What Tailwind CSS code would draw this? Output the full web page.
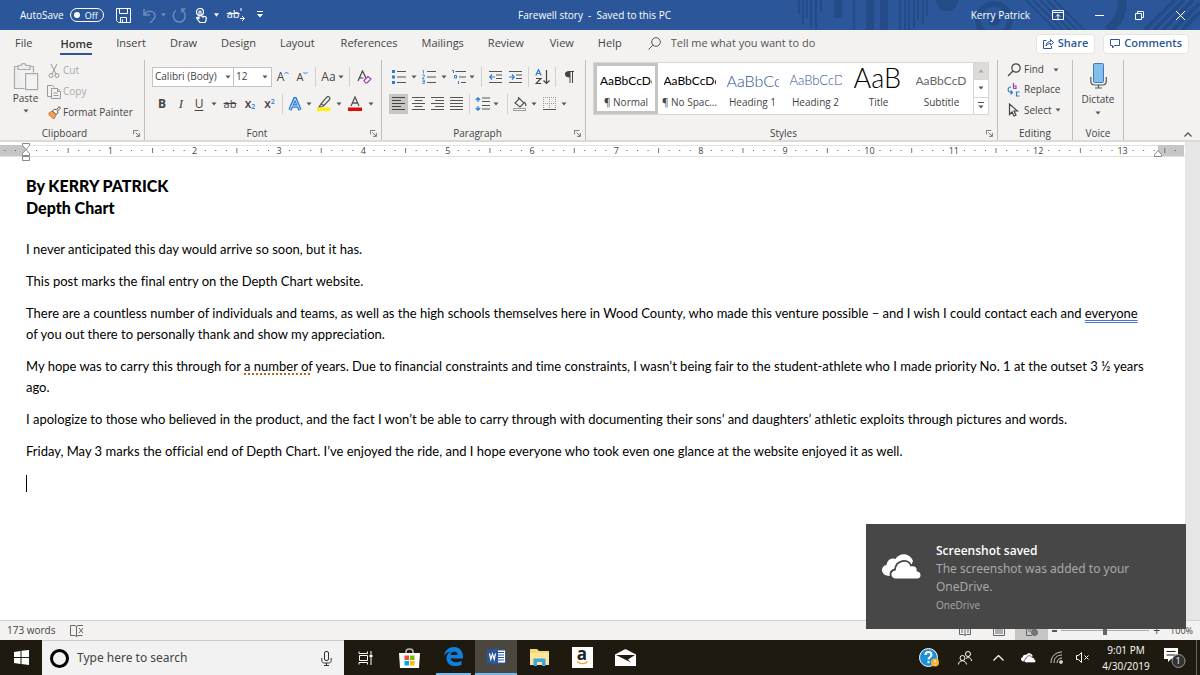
<!DOCTYPE html>
<html lang="en">
<head>
<meta charset="utf-8">
<title>Farewell story - Word</title>
<script src="https://cdn.jsdelivr.net/npm/@tailwindcss/browser@4"></script>
</head>
<body class="h-screen flex flex-col overflow-hidden bg-white font-['Open_Sans',sans-serif] text-[11px] text-[#444] select-none">
<svg width="0" height="0" class="absolute">
  <symbol id="caret" viewBox="0 0 6 4"><path d="M0.5 0.5h5L3 3.5z" fill="#555"/></symbol>
  <symbol id="launch" viewBox="0 0 8 8"><path d="M.5 5V.5H6M3 3l4 4M7.300 3.500v3.800H3.500" fill="none" stroke="#666"/></symbol>
  <symbol id="cloud" viewBox="0 0 40 26"><path d="M8 22C-2 22-2 12 4.500 11 5.500 5 10 3.500 13.500 5 18-2 28-1 31 7L28 14z" fill="#fff"/><path d="M15 25.500C7 25.500 6.500 17 13 15.500 14 6 26 4 29 11.500 33 10.500 36 13 35.500 16.500 41 17.500 40.500 25.500 35 25.500z" fill="#fff" stroke="var(--halo)" stroke-width="1.800"/></symbol>
</svg>

<header class="relative h-[30px] shrink-0 bg-[#2b579a] text-white flex items-center text-[10px]">
  <svg class="absolute right-0 top-0" width="410" height="30" viewBox="0 0 410 30" fill="none" stroke="#234b88" stroke-width="2" aria-hidden="true">
    <path d="M9 0v14M13 0v24M17 0v18M21 0v28M26 0v30M31 0v12M64 0v30M110 0v30M115 0v30M119 0v30M124 0v28M128 0v20M133 0v24M137 0v16"/>
    <path d="M48 0v18M80 0v30M94 0v30" stroke-width="8"/>
    <circle cx="157" cy="0" r="11" fill="#234b88" stroke="none"/>
    <circle cx="204" cy="20" r="16" stroke-width="6"/><circle cx="204" cy="20" r="5" fill="#234b88"/>
    <path d="M236 0l30 30M243 0l30 30M250 0l30 30M257 0l30 30M264 0l30 30"/>
    <path d="M332 0c2 12-4 22-14 30" stroke-width="9"/>
    <path d="M385 0l-30 30M394 0l-30 30M403 0l-30 30M410 3l-27 27M410 12l-18 18" stroke-width="4"/>
  </svg>
  <div class="relative flex-1 flex items-center pl-5">
    <label class="flex items-center gap-[6px]">AutoSave
      <input type="checkbox" role="switch" class="peer sr-only">
      <span class="w-[34px] h-[14px] rounded-full border border-white flex items-center justify-between pl-[3px] pr-[5px] text-[9px] leading-none"><span class="size-[6px] rounded-full bg-white"></span>Off</span>
    </label>
    <button aria-label="Save" class="ml-3"><svg width="15" height="15" viewBox="0 0 15 15" fill="none" stroke="#fff"><path d="M.5 .5h14v14H2.500l-2-2zM3.500 .5v5h8v-5M4.500 14.500v-5h6v5M6.500 11.500v3"/></svg></button>
    <button aria-label="Undo" class="ml-3 flex items-center gap-1 opacity-30"><svg width="14" height="15" viewBox="0 0 14 15" fill="none" stroke="#fff" stroke-width="1.500"><path d="M1 1v6h6M1 7C5 1 12 3 12 8c0 3-3 5-5 7"/></svg><svg width="5" height="4" viewBox="0 0 6 4"><path d="M0 0h6L3 4z" fill="#fff"/></svg></button>
    <button aria-label="Redo" class="ml-[6px] opacity-30"><svg width="15" height="15" viewBox="0 0 15 15" fill="none" stroke="#fff" stroke-width="1.500"><path d="M10 4.500V1h3.500M4 2.500C-1 6 1.500 14 7.500 14S15 6 10.500 2"/></svg></button>
    <button aria-label="Touch mode" class="ml-2 flex items-center gap-[6px]"><svg width="13" height="15" viewBox="0 0 13 15" fill="none" stroke="#fff" stroke-width="1.200"><circle cx="5" cy="4" r="3.500"/><path d="M4 11V4c0-1.300 2-1.300 2 0v4l4 .5c1.500.3 1.500 1.500 1 4l-1 2H5L1.500 10c0-1 1.500-1 2.500 1M8 8v2"/></svg><svg width="5" height="4" viewBox="0 0 6 4"><path d="M0 0h6L3 4z" fill="#fff"/></svg></button>
    <button aria-label="Replace text" class="ml-2 flex text-[11px] leading-none"><span class="line-through">ab</span><svg width="5" height="14" viewBox="0 0 5 14" fill="none" stroke="#fff"><path d="M1 0v3M0 10.500h4M2 8l2.500 2.500L2 13"/></svg></button>
    <button aria-label="Customize toolbar" class="ml-3"><svg width="6" height="8" viewBox="0 0 6 8"><path d="M0 0h6v1H0zM0 3h6L3 6.500z" fill="#fff"/></svg></button>
  </div>
  <h1 class="relative pr-4 whitespace-pre">Farewell story  -  Saved to this PC</h1>
  <div class="relative flex-1 flex items-center justify-end pr-[15px]">
    <span>Kerry Patrick</span>
    <button aria-label="Ribbon display options" class="ml-[22px]"><svg width="12" height="10" viewBox="0 0 12 10" fill="none" stroke="#fff"><path d="M.5 .5h11v9H.5zM.5 2.500h11M6 9V4.500M4 6.500l2-2 2 2"/></svg></button>
    <button aria-label="Minimize" class="ml-[31px]"><svg width="9" height="9" viewBox="0 0 9 9" stroke="#fff"><path d="M0 4.500h9"/></svg></button>
    <button aria-label="Restore" class="ml-[31px]"><svg width="9" height="9" viewBox="0 0 9 9" fill="none" stroke="#fff"><path d="M.5 2.500h6v6h-6zM2.500 2V.5h6v6H7"/></svg></button>
    <button aria-label="Close" class="ml-[32px]"><svg width="9" height="9" viewBox="0 0 9 9" stroke="#fff"><path d="M0 0l9 9M9 0L0 9"/></svg></button>
  </div>
</header>

<nav class="h-[27px] shrink-0 bg-[#f3f2f1] flex items-center pl-[15px] pr-[11px] gap-6 whitespace-nowrap">
  <a href="#" class="pr-1">File</a>
  <a href="#" class="font-semibold text-[#333] border-b-2 border-[#2b579a] pt-[2px] leading-[19px]">Home</a>
  <a href="#">Insert</a><a href="#">Draw</a><a href="#">Design</a><a href="#">Layout</a><a href="#" class="pl-[2px]">References</a><a href="#">Mailings</a><a href="#">Review</a><a href="#" class="pl-[2px]">View</a><a href="#">Help</a>
  <label class="flex-1 flex items-center gap-[10px] pl-[2px]"><svg width="13" height="13" viewBox="0 0 13 13" fill="none" stroke="#555"><circle cx="8" cy="5" r="4.300"/><path d="M5 8l-4.500 4.500"/></svg><input type="text" aria-label="Tell me what you want to do" placeholder="Tell me what you want to do" class="w-[170px] outline-none placeholder:text-[#555]"></label>
  <div class="flex gap-2 font-semibold text-[#2b579a]">
    <button class="h-5 px-[6px] bg-white border border-[#e6e4e2] rounded-sm flex items-center gap-1"><svg width="11" height="11" viewBox="0 0 11 11" fill="none" stroke="#2b579a"><path d="M3.500 2.500H.5v8h8V8M3 8c0-3 2-4.500 4.500-4.500v-2L10.500 4.500 7.500 7V5.500C5.500 5.500 4 6 3 8z"/></svg>Share</button>
    <button class="h-5 px-[6px] bg-white border border-[#e6e4e2] rounded-sm flex items-center gap-1"><svg width="10" height="10" viewBox="0 0 10 10" fill="none" stroke="#2b579a"><path d="M.5 .5h9v6h-5l-2 2.500v-2.500h-2z"/></svg>Comments</button>
  </div>
</nav>

<main class="contents">
<section aria-label="Ribbon" class="h-[85px] shrink-0 bg-[#f3f2f1] border-b-2 border-[#dcdad8] flex pt-[3px] text-[10px] whitespace-nowrap">
  <div class="w-[145px] shrink-0 border-r border-[#c0bebc] flex flex-col justify-between">
    <div class="flex h-[63px]">
      <button class="w-[47px] pl-1 flex flex-col items-center"><svg class="mt-[3px]" width="26" height="28" viewBox="0 0 26 28" fill="none" stroke="#aaa" stroke-width="1.200"><path d="M4.500 3.500H1.500v22h10M17.500 3.500h3v6M5 2.500h3c0-2.500 5-2.500 5 0h4v4H5z" fill="#eee"/><path d="M12.600 10.600h12v16h-12z" fill="#f3f2f1"/></svg><span class="leading-[14px]">Paste</span><svg class="mt-1" width="6" height="4"><use href="#caret"/></svg></button>
      <div class="flex flex-col">
        <button class="h-[21px] flex items-center gap-[3px] pl-px text-[#aaa]"><svg width="12" height="14" viewBox="0 0 12 14" fill="none" stroke="#999"><path d="M3 0l5 10M9 0L4 10"/><circle cx="3" cy="11.500" r="2"/><circle cx="9" cy="11.500" r="2"/></svg>Cut</button>
        <button class="h-[21px] flex items-center gap-[2px] text-[#aaa]"><svg width="14" height="14" viewBox="0 0 14 14" fill="none" stroke="#999"><path d="M4.500 11.500h-4V.5h5l2 2M4.500 3.500h6l3 3v7h-9zM10.500 3.500v3h3M6.500 8h4M6.500 10.500h5"/></svg>Copy</button>
        <button class="h-[21px] flex items-center gap-[2px] pl-px"><svg width="13" height="13" viewBox="0 0 13 13"><path d="M1 7l3-2 4 4-2 4-5-4z" fill="#f0a259" stroke="#d67a28"/><path d="M4.500 5L6.500 3l2 1L11 .5 12.500 2 9.500 5l.5 2-2 1.500z" fill="#fff" stroke="#555"/></svg>Format Painter</button>
      </div>
    </div>
    <div class="flex items-center h-[14px] pr-1"><span class="flex-1 text-center pr-1">Clipboard</span><button aria-label="Clipboard settings"><svg width="7" height="7"><use href="#launch"/></svg></button></div>
  </div>

  <div class="w-[237px] shrink-0 border-r border-[#c0bebc] flex flex-col justify-between pl-[7px]">
    <div>
      <div class="flex items-center h-[27px] mt-[3px]">
        <div class="relative"><select aria-label="Font" class="appearance-none block w-[82px] h-5 bg-white border border-[#c6c4c2] pl-[2px]"><option>Calibri (Body)</option></select><svg class="absolute right-[3px] top-2 pointer-events-none" width="6" height="4"><use href="#caret"/></svg></div>
        <div class="relative"><select aria-label="Font size" class="appearance-none block w-[39px] h-5 bg-white border border-[#c6c4c2] -ml-px pl-[2px]"><option>12</option></select><svg class="absolute right-1 top-2 pointer-events-none" width="6" height="4"><use href="#caret"/></svg></div>
        <button aria-label="Grow font" class="w-[22px] flex justify-center text-[12px] leading-none">A<svg width="5" height="4" viewBox="0 0 5 4" fill="none" stroke="#2b7cd3"><path d="M.5 3L2.500 1l2 2"/></svg></button>
        <button aria-label="Shrink font" class="w-[17px] flex justify-center text-[11px] leading-none">A<svg width="5" height="4" viewBox="0 0 5 4" fill="none" stroke="#2b7cd3"><path d="M.5 1L2.500 3l2-2"/></svg></button>
        <i class="w-px h-5 bg-[#d2d0ce] mx-1"></i>
        <button aria-label="Change case" class="w-[25px] flex items-center justify-center gap-[2px] text-[12px] leading-none">Aa<svg class="shrink-0" width="6" height="4"><use href="#caret"/></svg></button>
        <i class="w-px h-5 bg-[#d2d0ce] mx-1"></i>
        <button aria-label="Clear formatting" class="w-[21px] flex justify-center"><svg width="15" height="14" viewBox="0 0 15 14" fill="none"><path d="M1 11L5.500 1 9 8M2.500 8h4" stroke="#444" stroke-width="1.200"/><path d="M7 10.500l4-4 3 2.500-4 4H8.500z" stroke="#9b3fae" stroke-width="1.200"/></svg></button>
      </div>
      <div class="flex items-center h-[27px] text-[12px] leading-none">
        <button aria-label="Bold" class="w-5 font-bold">B</button>
        <button aria-label="Italic" class="w-[18px] italic font-['Liberation_Serif',serif] text-[13px]">I</button>
        <button aria-label="Underline" class="w-[18px] underline underline-offset-2">U</button>
        <button aria-label="Underline styles" class="w-3 flex justify-center"><svg width="6" height="4"><use href="#caret"/></svg></button>
        <button aria-label="Strikethrough" class="w-5 line-through text-[11px]">ab</button>
        <button aria-label="Subscript" class="w-5 flex items-end justify-center font-semibold">x<span class="text-[7px] leading-none text-[#2b7cd3]">2</span></button>
        <button aria-label="Superscript" class="w-[19px] flex items-start justify-center font-semibold">x<span class="text-[7px] leading-none text-[#2b7cd3]">2</span></button>
        <i class="w-px h-5 bg-[#d2d0ce] mx-[3px]"></i>
        <button aria-label="Text effects" class="w-[18px] flex justify-center"><svg width="14" height="14" viewBox="0 0 14 14" fill="none"><path d="M2 13L7 1l5 12M4 9h6" stroke="#2b7cd3" stroke-width="3.400"/><path d="M2.200 12.500L7 1.500l4.800 11M4 9h6" stroke="#bfe0f7"/></svg></button>
        <button aria-label="Text effects menu" class="w-[10px] flex justify-center"><svg width="6" height="4"><use href="#caret"/></svg></button>
        <button aria-label="Highlight colour" class="w-[20px] flex justify-center"><svg width="14" height="15" viewBox="0 0 14 15" fill="none"><path d="M4 8l5.500-6.500C11-.5 14 1.500 12.500 3.500L7 9.500zM4 8l-2 3 3.500-.5L7 9.500" stroke="#555" stroke-width="1.200"/><path d="M0 11.500h13v3.500H0z" fill="#fff000"/></svg></button>
        <button aria-label="Highlight menu" class="w-[10px] flex justify-center"><svg width="6" height="4"><use href="#caret"/></svg></button>
        <button aria-label="Font colour" class="w-[22px] flex justify-center"><svg width="14" height="15" viewBox="0 0 14 15" fill="none"><path d="M3 10L7 1l4 9M4.500 7h5" stroke="#555" stroke-width="1.300"/><path d="M0 11.500h14v3.500H0z" fill="#e00b0b"/></svg></button>
        <button aria-label="Font colour menu" class="w-[9px] flex justify-center"><svg width="6" height="4"><use href="#caret"/></svg></button>
      </div>
    </div>
    <div class="flex items-center h-[14px] pr-1"><span class="flex-1 text-center pr-2">Font</span><button aria-label="Font settings"><svg width="7" height="7"><use href="#launch"/></svg></button></div>
  </div>

  <div class="w-[204px] shrink-0 border-r border-[#c0bebc] flex flex-col justify-between pl-[7px]">
    <div>
      <div class="flex items-center h-[27px] mt-[3px]">
        <button aria-label="Bullets" class="w-[19px] flex justify-center"><svg width="14" height="14" viewBox="0 0 14 14"><path d="M0 0h3v3H0zM0 5.500h3v3H0zM0 11h3v3H0z" fill="#2b7cd3"/><path d="M5 1.500h9M5 7h9M5 12.500h9" stroke="#555"/></svg></button>
        <button aria-label="Bullets menu" class="w-[11px] flex justify-center"><svg width="6" height="4"><use href="#caret"/></svg></button>
        <button aria-label="Numbering" class="w-[19px] flex justify-center"><svg width="14" height="14" viewBox="0 0 14 14" fill="none"><path d="M.5 .5h1v3M.3 5h2v1.500l-2 2h2M.3 10h2v3.500h-2M.3 11.700h2" stroke="#2b7cd3" stroke-width=".8"/><path d="M5 1.500h9M5 7h9M5 12.500h9" stroke="#555"/></svg></button>
        <button aria-label="Numbering menu" class="w-[11px] flex justify-center"><svg width="6" height="4"><use href="#caret"/></svg></button>
        <button aria-label="Multilevel list" class="w-[19px] flex justify-center"><svg width="14" height="14" viewBox="0 0 14 14" fill="none"><path d="M0 .5h1.500V3M2.500 5.500h2V8h-2zM6.500 11v3" stroke="#2b7cd3"/><path d="M3.500 1.500H14M7 7h7M9 12.500h5" stroke="#555"/></svg></button>
        <button aria-label="Multilevel menu" class="w-[8px] flex justify-center"><svg width="6" height="4"><use href="#caret"/></svg></button>
        <i class="w-px h-5 bg-[#d2d0ce] ml-[5px] mr-[3px]"></i>
        <button aria-label="Decrease indent" class="w-5 flex justify-center"><svg width="13" height="12" viewBox="0 0 13 12" fill="none"><path d="M0 .5h13M7 4h6M7 7.500h6M0 11.500h13" stroke="#555"/><path d="M6 6H.8M3 3.500L.8 6 3 8.500" stroke="#2b7cd3" stroke-width="1.200"/></svg></button>
        <button aria-label="Increase indent" class="w-5 flex justify-center"><svg width="13" height="12" viewBox="0 0 13 12" fill="none"><path d="M0 .5h13M7 4h6M7 7.500h6M0 11.500h13" stroke="#555"/><path d="M0 6h5M3 3.500L5.200 6 3 8.500" stroke="#2b7cd3" stroke-width="1.200"/></svg></button>
        <i class="w-px h-5 bg-[#d2d0ce] mx-[3px]"></i>
        <button aria-label="Sort" class="w-5 flex justify-center"><svg width="15" height="16" viewBox="0 0 15 16" fill="none"><path d="M.8 6.500L3.500 .5l2.700 6M1.700 4.500h3.600" stroke="#2b7cd3" stroke-width="1.200"/><path d="M1 9.500h5l-5 5h5.300M11.500 1v13M8.500 11.500l3 3 3-3" stroke="#444" stroke-width="1.200"/></svg></button>
        <i class="w-px h-5 bg-[#d2d0ce] mx-[3px]"></i>
        <button aria-label="Show paragraph marks" class="w-5 flex justify-center"><svg width="9" height="12" viewBox="0 0 9 12"><path d="M9 0v1H8v11H7V1H5.500v11h-1V6.500C-1.500 6.500-1.500 0 4 0z" fill="#444"/></svg></button>
      </div>
      <div class="flex items-center h-[27px]">
        <button aria-label="Align left" class="w-[19px] h-5 bg-[#c8c6c4] flex items-center justify-center"><svg width="13" height="13" viewBox="0 0 13 13" stroke="#444"><path d="M0 .5h13M0 3.500h9M0 6.500h13M0 9.500h9M0 12.500h13"/></svg></button>
        <button aria-label="Center" class="w-5 flex justify-center"><svg width="13" height="13" viewBox="0 0 13 13" stroke="#555"><path d="M0 .5h13M2.500 3.500h8M0 6.500h13M2.500 9.500h8M0 12.500h13"/></svg></button>
        <button aria-label="Align right" class="w-[19px] flex justify-center"><svg width="13" height="13" viewBox="0 0 13 13" stroke="#555"><path d="M0 .5h13M4 3.500h9M0 6.500h13M4 9.500h9M0 12.500h13"/></svg></button>
        <button aria-label="Justify" class="w-[19px] flex justify-center"><svg width="13" height="13" viewBox="0 0 13 13" stroke="#555"><path d="M0 .5h13M0 3.500h13M0 6.500h13M0 9.500h13M0 12.500h13"/></svg></button>
        <i class="w-px h-5 bg-[#d2d0ce] mx-[3px]"></i>
        <button aria-label="Line spacing" class="w-[27px] flex items-center gap-[3px] pl-[2px]"><svg width="15" height="14" viewBox="0 0 15 14" fill="none"><path d="M3 1v4M3 9v4M.8 3L3 .8 5.200 3M.8 11L3 13.200 5.200 11" stroke="#2b7cd3" stroke-width="1.200"/><path d="M7 1h8M7 4.500h8M7 8.500h8M7 12h8" stroke="#555"/></svg><svg width="6" height="4"><use href="#caret"/></svg></button>
        <i class="w-px h-5 bg-[#d2d0ce] ml-[7px] mr-[3px]"></i>
        <button aria-label="Shading" class="w-[18px] flex justify-center"><svg width="14" height="14" viewBox="0 0 14 14" fill="none" stroke="#555"><path d="M2 6l4.500-4.500L11 6l-4 4zM5.500 3V0M11 5c1.500 1 2 3 1.500 4" stroke-width="1.200"/><path d="M.5 11.500h12v2H.5z" fill="#fff" stroke="#999"/></svg></button>
        <button aria-label="Shading menu" class="w-[10px] flex justify-center"><svg width="6" height="4"><use href="#caret"/></svg></button>
        <button aria-label="Borders" class="w-5 flex justify-center"><svg width="13" height="13" viewBox="0 0 13 13" fill="none" stroke="#999"><path d="M0 .5h13M0 6.500h13M.5 0v13M6.500 0v13M12.500 0v13" stroke-dasharray="1 1"/><path d="M0 12.500h13" stroke="#555"/></svg></button>
        <button aria-label="Borders menu" class="w-[10px] flex justify-center"><svg width="6" height="4"><use href="#caret"/></svg></button>
      </div>
    </div>
    <div class="flex items-center h-[14px] pr-1"><span class="flex-1 text-center pr-2">Paragraph</span><button aria-label="Paragraph settings"><svg width="7" height="7"><use href="#launch"/></svg></button></div>
  </div>

  <div class="w-[412px] shrink-0 border-r border-[#c0bebc] flex flex-col justify-between pl-[7px]">
    <div class="flex w-[396px] h-[53px] mt-[2px] bg-white border border-[#d8d6d4]">
      <button class="w-[64px] border-[3px] border-[#c6c4c2] flex flex-col items-center"><span class="h-[29px] w-[52px] overflow-hidden leading-[29px] text-left font-['Lato'] text-[12px] text-black">AaBbCcDd</span><span class="leading-[14px]">¶ Normal</span></button>
      <button class="w-[63px] pt-[3px] flex flex-col items-center"><span class="h-[29px] w-[52px] overflow-hidden leading-[29px] text-left font-['Lato'] text-[12px] text-black">AaBbCcDd</span><span class="leading-[14px]">¶ No Spac...</span></button>
      <button class="w-[63px] pt-[3px] flex flex-col items-center"><span class="h-[29px] w-[52px] overflow-hidden leading-[29px] text-left font-['Lato'] text-[16px] font-light text-[#2f5496]">AaBbCc</span><span class="leading-[14px]">Heading 1</span></button>
      <button class="w-[63px] pt-[3px] flex flex-col items-center"><span class="h-[29px] w-[52px] overflow-hidden leading-[29px] text-left font-['Lato'] text-[13px] font-light text-[#2f5496]">AaBbCcD</span><span class="leading-[14px]">Heading 2</span></button>
      <button class="w-[63px] pt-[3px] flex flex-col items-center"><span class="h-[29px] w-[50px] overflow-hidden leading-[24px] text-left font-['Lato'] text-[27px] font-light text-black">AaB</span><span class="leading-[14px]">Title</span></button>
      <button class="w-[63px] pt-[3px] flex flex-col items-center"><span class="h-[29px] w-[52px] overflow-hidden leading-[29px] text-left font-['Lato'] text-[12px] text-[#666]">AaBbCcD</span><span class="leading-[14px]">Subtitle</span></button>
      <div class="flex-1 flex flex-col border-l border-[#d8d6d4]">
        <button aria-label="Previous styles" class="flex-1 bg-[#dddbd9] flex items-center justify-center"><svg class="rotate-180 opacity-40" width="6" height="4"><use href="#caret"/></svg></button>
        <button aria-label="Next styles" class="flex-1 border-y border-[#d8d6d4] flex items-center justify-center"><svg width="6" height="4"><use href="#caret"/></svg></button>
        <button aria-label="More styles" class="flex-1 flex flex-col gap-[2px] items-center justify-center"><i class="w-[6px] h-px bg-[#555]"></i><svg width="6" height="4"><use href="#caret"/></svg></button>
      </div>
    </div>
    <div class="flex items-center h-[14px] pr-1"><span class="flex-1 text-center pr-3">Styles</span><button aria-label="Style settings"><svg width="7" height="7"><use href="#launch"/></svg></button></div>
  </div>

  <div class="w-[75px] shrink-0 border-r border-[#c0bebc] flex flex-col justify-between">
    <div class="pl-[9px]">
      <button class="h-[19px] flex items-center gap-[3px]"><svg width="14" height="14" viewBox="0 0 14 14" fill="none" stroke="#444" stroke-width="1.200"><circle cx="9" cy="5" r="4.200"/><path d="M6 8l-5 5"/></svg>Find<svg class="ml-[6px]" width="6" height="4"><use href="#caret"/></svg></button>
      <button class="h-[21px] flex items-center gap-[3px]"><svg width="14" height="14" viewBox="0 0 14 14" fill="none"><path d="M6.500 0v5.500M6.500 3h2.500v2.500H6.500" stroke="#9b3fae" stroke-width="1.200"/><path d="M4 4C0 4 0 9.500 5 9.500M3.500 7.500l2 2-2 2M12.500 9H9.500v4h3" stroke="#2b7cd3" stroke-width="1.200"/></svg>Replace</button>
      <button class="h-[20px] flex items-center gap-[3px]"><svg width="14" height="14" viewBox="0 0 14 14" fill="none" stroke="#444" stroke-width="1.200"><path d="M2.500 1v10.500L5 9l2 4 2-1-2-4h3.500z"/></svg>Select<svg width="6" height="4"><use href="#caret"/></svg></button>
    </div>
    <span class="h-[14px] text-center">Editing</span>
  </div>
  <div class="w-[51px] shrink-0 border-r border-[#c0bebc] flex flex-col justify-between">
    <button class="flex flex-col items-center"><svg class="mt-[3px]" width="17" height="26" viewBox="0 0 17 26" fill="none"><rect x="3.500" y=".5" width="10" height="19" rx="1" fill="#83beec" stroke="#3a7cb8"/><path d="M.8 14v4c0 3 2 4 4 4h7.500c2 0 4-1 4-4v-4M8.500 22v3M5 25h7" stroke="#555" stroke-width="1.200"/></svg><span class="mt-[2px] leading-[16px]">Dictate</span><svg class="mt-1" width="6" height="4"><use href="#caret"/></svg></button>
    <span class="h-[14px] text-center">Voice</span>
  </div>
  <div class="flex-1 flex items-end justify-end pr-2 pb-[3px]"><button aria-label="Collapse the ribbon"><svg width="8" height="5" viewBox="0 0 8 5" fill="none" stroke="#555" stroke-width="1.300"><path d="M.5 4.500L4 1l3.500 3.500"/></svg></button></div>
</section>

<section class="flex-1 min-h-0 flex">
  <div class="flex-1 flex flex-col min-w-0">
    <svg id="ruler" class="block w-full h-[22px] shrink-0 font-['Open_Sans'] text-[9px]" aria-label="Ruler"></svg>
    <article class="flex-1 pl-[26px] pr-9 pt-[11px] text-[13px] leading-[21px] text-black font-['Lato'] [font-variant-ligatures:none] outline-none" contenteditable="true" spellcheck="false">
      <h2 class="font-black text-[16px] leading-[22px]">By KERRY PATRICK<br>Depth Chart</h2>
      <div class="mt-5 flex flex-col gap-[11px]">
        <p>I never anticipated this day would arrive so soon, but it has.</p>
        <p>This post marks the final entry on the Depth Chart website.</p>
        <p>There are a countless number of individuals and teams, as well as the high schools themselves here in Wood County, who made this venture possible – and I wish I could contact each and <span class="underline decoration-double decoration-[#4a72d8] underline-offset-2">everyone</span> of you out there to personally thank and show my appreciation.</p>
        <p>My hope was to carry this through for <span class="underline decoration-dotted decoration-2 decoration-[#b5651d] underline-offset-2">a number of</span> years. Due to financial constraints and time constraints, I wasn’t being fair to the student-athlete who I made priority No. 1 at the outset 3 ½ years ago.</p>
        <p>I apologize to those who believed in the product, and the fact I won’t be able to carry through with documenting their sons’ and daughters’ athletic exploits through pictures and words.</p>
        <p>Friday, May 3 marks the official end of Depth Chart. I’ve enjoyed the ride, and I hope everyone who took even one glance at the website enjoyed it as well.</p>
        <p class="flex items-center h-[21px]"><i class="w-px h-[17px] bg-black"></i></p>
      </div>
    </article>
  </div>
  <div class="w-[15px] shrink-0 bg-[#e6e6e6]"></div>
</section>
</main>

<footer class="h-5 shrink-0 bg-[#f3f2f1] border-t border-[#d2d0ce] flex items-center pl-[7px] pr-[7px] text-[10px]">
  <span>173 words</span>
  <button aria-label="Proofing" class="ml-[14px]"><svg width="14" height="12" viewBox="0 0 14 12" fill="none" stroke="#666"><path d="M6.500 1.500L5 .5H.5v10H5l1.500 1 1.500-1h4.500M6.500 1.500v10M6.500 1.500L8 .5h5M9 3l4 5M13 3L9 8"/></svg></button>
  <div class="flex-1"></div>
  <button aria-label="Read mode" class="w-[34px] h-full flex items-center justify-center"><svg width="12" height="10" viewBox="0 0 12 10" fill="none" stroke="#666"><path d="M.5 .5h4L6 1.500 7.500 .5h4v8h-4L6 9.500 4.500 8.500h-4zM6 1.500v8M2 4h2M2 6h2M8 4h2M8 6h2"/></svg></button>
  <button aria-label="Print layout" class="w-[33px] h-full flex items-center justify-center"><svg width="12" height="10" viewBox="0 0 12 10" fill="none" stroke="#666"><path d="M.5 .5h11v9H.5zM2 3h8M2 5h8M2 7h8"/></svg></button>
  <button aria-label="Web layout" class="w-[33px] h-full bg-[#c8c6c4] flex items-center justify-center"><svg width="12" height="10" viewBox="0 0 12 10" fill="none" stroke="#666"><path d="M6 9.500H.5v-9h9V4M2 3h5M2 5h3"/><circle cx="8.500" cy="6.500" r="3" fill="#777"/></svg></button>
  <span class="ml-1 w-[5px] h-[2px] bg-[#555]"></span>
  <span class="relative mx-1 w-[88px] h-px bg-[#aaa]"><span class="absolute left-[42px] -top-[5px] w-1 h-[10px] bg-[#666]"></span></span>
  <span class="text-[12px] leading-none">+</span>
  <span class="ml-[10px] text-[9px]">100%</span>
</footer>

<aside class="absolute right-[14px] bottom-[46px] w-[320px] h-[105px] bg-[#474747] flex pl-4 pt-[18px] gap-[14px] [--halo:#474747]">
  <svg class="mt-3 shrink-0" width="40" height="26"><use href="#cloud"/></svg>
  <div class="text-[#a8a8a8] text-[12px] leading-[18px]">
    <p class="text-white font-semibold">Screenshot saved</p>
    <p class="font-['Noto_Sans']">The screenshot was added to your<br>OneDrive.</p>
    <p class="text-[10px]">OneDrive</p>
  </div>
</aside>

<nav aria-label="Taskbar" class="h-[35px] shrink-0 bg-[#1f1a10] text-white flex items-center">
  <button aria-label="Start" class="w-[42px] flex justify-center"><svg width="15" height="15" viewBox="0 0 15 15" fill="#fff"><path d="M0 2l6.500-1v6H0zM7.500.8L15 0v7H7.500zM0 8h6.500v6L0 13zM7.500 8H15v7l-7.500-1z"/></svg></button>
  <label class="w-[302px] h-full bg-[#f2f2f2] border-t border-[#ccc] flex items-center pl-2 pr-3 gap-2">
    <span class="size-[19px] shrink-0 rounded-full border-[3px] border-black"></span>
    <input type="text" aria-label="Type here to search" placeholder="Type here to search" class="flex-1 min-w-0 font-['Noto_Sans'] text-[12px] outline-none placeholder:text-[#444]">
    <svg width="11" height="15" viewBox="0 0 11 15" fill="none" stroke="#333"><rect x="3.500" y=".5" width="4" height="9" rx="1.500"/><path d="M.8 7v2.500c0 2 1.500 2.500 2.500 2.500h4.400c1 0 2.500-.5 2.500-2.500V7M5.500 12v3M3 14.500h5"/></svg>
  </label>
  <button aria-label="Task view" class="w-[43px] flex justify-center"><svg width="15" height="14" viewBox="0 0 15 14" fill="none" stroke="#fff"><path d="M1 .5v2h8.500v-2M1 13.500v-2h8.500v2M1.500 4.500h8v5h-8zM13 0v3M13 7v7"/><path d="M12 4h2v2h-2z" fill="#fff"/></svg></button>
  <button aria-label="Store" class="w-[45px] flex justify-center"><svg width="21" height="20" viewBox="0 0 21 20"><path d="M7 6V3.500C7 0 14 0 14 3.500V6" fill="none" stroke="#bbb" stroke-width="1.500"/><path d="M0 5h21l-1 15H1z" fill="#fff"/><path d="M5.500 7.500H10V12H5.500z" fill="#f25022"/><path d="M11 7.500h4.500V12H11z" fill="#7fba00"/><path d="M5.500 13H10v4.500H5.500z" fill="#00a4ef"/><path d="M11 13h4.500v4.500H11z" fill="#ffb900"/></svg></button>
  <button aria-label="Edge" class="w-[35px] mx-1 h-full border-b-2 border-[#76b9ed] flex items-center justify-center"><svg width="19" height="19" viewBox="0 0 19 19"><path d="M0 9C1 3 5 0 10 0c6 0 9 4.500 9 10v1.500H6.500c.5 4 6.500 5 11 2.300v4C11 21 2.500 18.500 2.500 11.500c0-3 1.500-5.500 4.500-7C4 5 1.500 6.500 0 9zm6.500-1h7C13.500 3 7 3.500 6.500 8z" fill="#0f80e0" fill-rule="evenodd"/></svg></button>
  <button aria-label="Word" class="w-[42px] h-full bg-[#4b473f] border-b-2 border-[#76b9ed] flex items-center justify-center"><svg width="19" height="17" viewBox="0 0 19 17"><path d="M10 2h8.500v13H10z" fill="#fff" stroke="#2b579a"/><path d="M11 4.500h6M11 7h6M11 9.500h6M11 12h6" stroke="#2b579a"/><path d="M0 2l11-2v17L0 15z" fill="#2b579a"/><path d="M2.500 5.500l1.300 6L5.500 6l1.700 5.500 1.300-6" fill="none" stroke="#fff" stroke-width="1.200"/></svg></button>
  <button aria-label="File Explorer" class="w-[44px] flex justify-center"><svg width="19" height="17" viewBox="0 0 19 17"><path d="M0 0h7l2 2h10v14H0z" fill="#f8d775"/><path d="M0 4h19v12H0z" fill="#fbe59c"/><path d="M3.500 16V9.500h12V17H12v-4H7v4H3.500z" fill="#3ea7dd"/></svg></button>
  <button aria-label="Amazon" class="w-[42px] flex justify-center"><span class="size-[21px] bg-white text-[#222] flex flex-col items-center font-bold text-[17px] leading-[14px]">a<svg width="11" height="4" viewBox="0 0 11 4" fill="none" stroke="#f79a1e" stroke-width="1.200"><path d="M0 .5c3 3 8 3 10.500 0"/></svg></span></button>
  <button aria-label="Mail" class="w-[44px] flex justify-center"><svg width="21" height="17" viewBox="0 0 21 17"><path d="M0 5.500L10.500 0 21 5.500V17H0z" fill="#fff"/><path d="M1 6h19l-7 4.500 3 3z" fill="#1f1a10"/></svg></button>
  <div class="flex-1"></div>
  <button aria-label="Help" class="w-[36px] flex justify-center"><svg width="21" height="19" viewBox="0 0 21 19"><circle cx="9.500" cy="9.500" r="9" fill="#1e90d8" stroke="#fff"/><path d="M6.500 7c0-4 6-4 6 0 0 2-3 2-3 4.500M9.500 13v2.200" fill="none" stroke="#fff" stroke-width="2"/><circle cx="16" cy="14.500" r="4" fill="#f5b32b"/><path d="M16 12v3M16 16v1" stroke="#fff"/></svg></button>
  <button aria-label="People" class="w-[35px] flex justify-center"><svg width="14" height="14" viewBox="0 0 14 14" fill="none" stroke="#fff"><circle cx="10" cy="3" r="2.500"/><circle cx="4.500" cy="7" r="2.500"/><path d="M.5 13.500c0-5 7.500-5 8 0M8 7.500c2.500-2 5.500-.5 5.500 2.500"/></svg></button>
  <button aria-label="Hidden icons" class="w-[33px] flex justify-center"><svg width="11" height="6" viewBox="0 0 11 6" fill="none" stroke="#fff" stroke-width="1.200"><path d="M.5 5.500l5-5 5 5"/></svg></button>
  <button aria-label="OneDrive" class="w-[26px] flex justify-center [--halo:#1f1a10]"><svg width="15" height="10"><use href="#cloud"/></svg></button>
  <button aria-label="Wi-Fi" class="w-[30px] flex justify-center"><svg width="13" height="13" viewBox="0 0 13 13" fill="none" stroke="#ccc"><path d="M1 12C1 5 6 1 12 1M4 12c0-5 3-8 8-8M7 12c0-3 2-5 5-5"/><circle cx="11" cy="11" r="1.500" fill="#ccc"/></svg></button>
  <button aria-label="Volume" class="w-[24px] flex justify-center"><svg width="14" height="11" viewBox="0 0 14 11" fill="none" stroke="#fff"><path d="M.5 3.500h2L5.500 .5v10l-3-3h-2zM8.500 3.500l4 4M12.500 3.500l-4 4"/></svg></button>
  <div class="w-[62px] text-center text-[10px] leading-[16px]"><p>9:01 PM</p><p>4/30/2019</p></div>
  <button aria-label="Notifications" class="w-[39px] pr-1 flex justify-center"><span class="relative"><svg width="22" height="21" viewBox="0 0 22 21"><path d="M0 1h14v11H7l-3 3v-3H0z" fill="#fff"/><path d="M2.500 4.500h9M2.500 8h9" stroke="#1f1a10"/><circle cx="14.500" cy="14" r="6.500" fill="#333" stroke="#999"/></svg><span class="absolute left-3 top-[7px] text-[9px] leading-[14px]">1</span></span></button>
  <div class="w-[4px] h-full border-l border-[#666]"></div>
</nav>

<script>
// Horizontal ruler: a mark every eighth of an inch, a figure on each whole inch.
const ruler = document.getElementById('ruler');
const inch = 84.35, zero = 26, end = 1158;
let marks = `<rect x="0" y="3" width="100%" height="1" fill="#e1e1e1"/><rect x="0" y="14" width="100%" height="1" fill="#e1e1e1"/>
<rect x="0" y="3" width="${zero}" height="11" fill="#c6c6c6"/><rect x="${end}" y="3" width="26" height="11" fill="#c6c6c6"/>`;
for (let i = -2; i <= 109; i++) {
  const x = zero + i * inch / 8;
  if (i === 0) continue;
  if (i > 0 && i % 8 === 0) marks += `<text x="${x}" y="12" text-anchor="middle" fill="#444">${i / 8}</text>`;
  else if (i % 4 === 0) marks += `<rect x="${x - .5}" y="6" width="1" height="5" fill="#777"/>`;
  else marks += `<rect x="${x - .5}" y="8" width="1" height="1" fill="#555"/>`;
}
marks += `<path d="M22.500 1.500h7v2l-3.500 4-3.500-4zM22.500 13.500v-2l3.500-4 3.500 4v2zM22.500 14.500h7v4h-7z" fill="#fff" stroke="#888"/>
<path d="M1154.500 14.500v-2l3.500-4 3.500 4v2z" fill="#fff" stroke="#888"/>`;
ruler.innerHTML = marks;
</script>
</body>
</html>
